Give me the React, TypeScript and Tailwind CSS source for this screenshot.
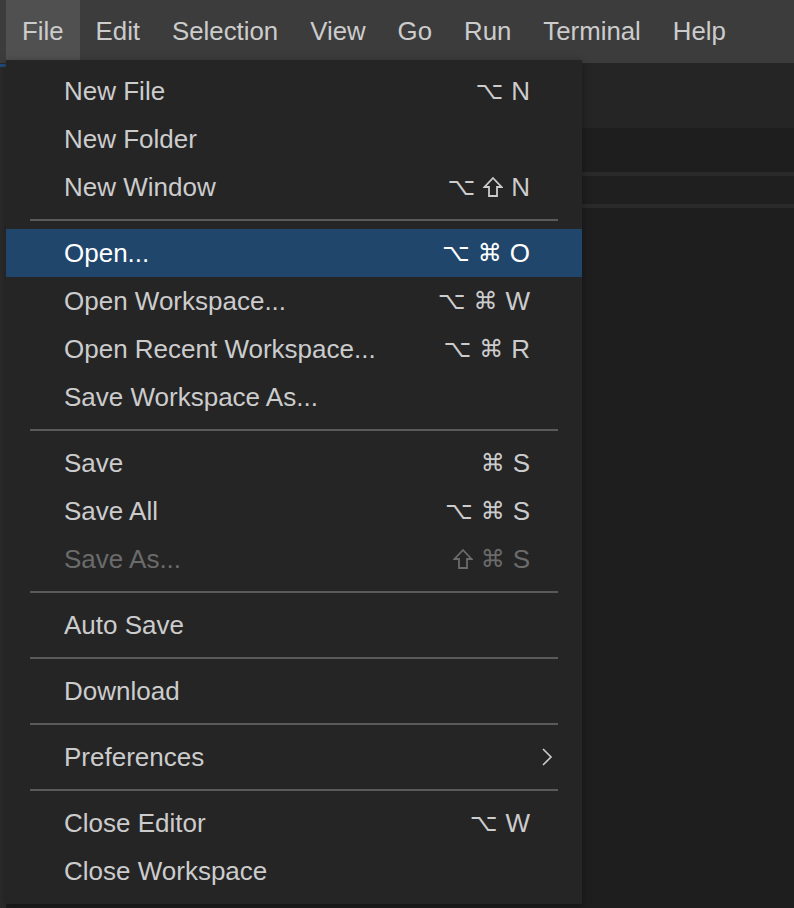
import React from 'react';

type Item =
  | { kind: 'item'; label: string; keys?: string[]; disabled?: boolean; active?: boolean; submenu?: boolean }
  | { kind: 'sep' };

const topMenus = ['File', 'Edit', 'Selection', 'View', 'Go', 'Run', 'Terminal', 'Help'];

const items: Item[] = [
  { kind: 'item', label: 'New File', keys: ['⌥', 'N'] },
  { kind: 'item', label: 'New Folder' },
  { kind: 'item', label: 'New Window', keys: ['⌥', 'shift', 'N'] },
  { kind: 'sep' },
  { kind: 'item', label: 'Open...', keys: ['⌥', '⌘', 'O'], active: true },
  { kind: 'item', label: 'Open Workspace...', keys: ['⌥', '⌘', 'W'] },
  { kind: 'item', label: 'Open Recent Workspace...', keys: ['⌥', '⌘', 'R'] },
  { kind: 'item', label: 'Save Workspace As...' },
  { kind: 'sep' },
  { kind: 'item', label: 'Save', keys: ['⌘', 'S'] },
  { kind: 'item', label: 'Save All', keys: ['⌥', '⌘', 'S'] },
  { kind: 'item', label: 'Save As...', keys: ['shift', '⌘', 'S'], disabled: true },
  { kind: 'sep' },
  { kind: 'item', label: 'Auto Save' },
  { kind: 'sep' },
  { kind: 'item', label: 'Download' },
  { kind: 'sep' },
  { kind: 'item', label: 'Preferences', submenu: true },
  { kind: 'sep' },
  { kind: 'item', label: 'Close Editor', keys: ['⌥', 'W'] },
  { kind: 'item', label: 'Close Workspace' },
];

function ShiftGlyph() {
  return (
    <svg width="20" height="22" viewBox="0 0 20 22" fill="none">
      <path d="M10 2 L18.5 11 L14 11 L14 20 L6 20 L6 11 L1.5 11 Z" stroke="currentColor" strokeWidth="1.8" strokeLinejoin="miter" />
    </svg>
  );
}

function Keys({ keys }: { keys: string[] }) {
  return (
    <span className="flex items-center gap-[8px] leading-none">
      {keys.map((k, i) =>
        k === 'shift' ? (
          <ShiftGlyph key={i} />
        ) : (
          <span key={i} className={k === '⌥' || k === '⌘' ? 'text-[24px]' : ''}>
            {k}
          </span>
        )
      )}
    </span>
  );
}

function MenuRow({ item }: { item: Extract<Item, { kind: 'item' }> }) {
  const color = item.disabled ? 'text-[#6b6b6b]' : item.active ? 'text-white' : 'text-[#cccccc]';
  return (
    <div
      className={`flex h-[48px] items-center pl-[58px] ${item.submenu ? 'pr-[29px]' : 'pr-[52px]'} ${
        item.active ? 'bg-[#20466c]' : ''
      } ${color}`}
    >
      <span className="flex-1 leading-none">{item.label}</span>
      {item.keys && <Keys keys={item.keys} />}
      {item.submenu && (
        <svg width="12" height="20" viewBox="0 0 12 20" fill="none">
          <polyline points="2,2 10,10 2,18" stroke="#cccccc" strokeWidth="1.6" />
        </svg>
      )}
    </div>
  );
}

export default function App() {
  return (
    <div
      className="relative h-[908px] w-[794px] overflow-hidden bg-[#1e1e1e] text-[26px]"
      style={{ fontFamily: '"Liberation Sans", "DejaVu Sans", Arial, sans-serif' }}
    >
      {/* Menubar */}
      <div className="flex h-[63px] bg-[#3c3c3c] pl-[6px] text-[25.8px] text-[#cccccc]">
        {topMenus.map((m, i) => (
          <div
            key={m}
            className={`flex h-[60px] items-center px-[16px] pt-[3px] leading-none ${i === 0 ? 'bg-[#505050]' : ''}`}
          >
            {m}
          </div>
        ))}
      </div>

      {/* Workbench behind the menu */}
      <div className="flex h-[845px]">
        <div className="flex w-[6px] flex-col bg-[#2b2b2b]">
          <div className="mt-[1px] h-[3px] bg-[#1f4b78]" />
        </div>
        <div className="flex flex-1 flex-col">
          <div className="h-[65px] bg-[#252526]" />
          <div className="h-[44px] bg-[#1e1e1e]" />
          <div className="h-[4px] bg-[#2a2a2a]" />
          <div className="h-[28px] bg-[#1f1f1f]" />
          <div className="h-[4px] bg-[#2a2a2a]" />
          <div className="flex-1 bg-[#1e1e1e]" />
        </div>
      </div>

      {/* File dropdown */}
      <div className="absolute left-[6px] top-[60px] w-[576px] bg-[#252526] pb-[9px] pt-[7px] shadow-[0_2px_8px_rgba(0,0,0,0.36)]">
        {items.map((it, i) =>
          it.kind === 'sep' ? (
            <div key={i} className="flex h-[18px] items-center px-[24px]">
              <div className="h-[2px] w-full bg-[#5a5a5a]" />
            </div>
          ) : (
            <MenuRow key={i} item={it} />
          )
        )}
      </div>
    </div>
  );
}
